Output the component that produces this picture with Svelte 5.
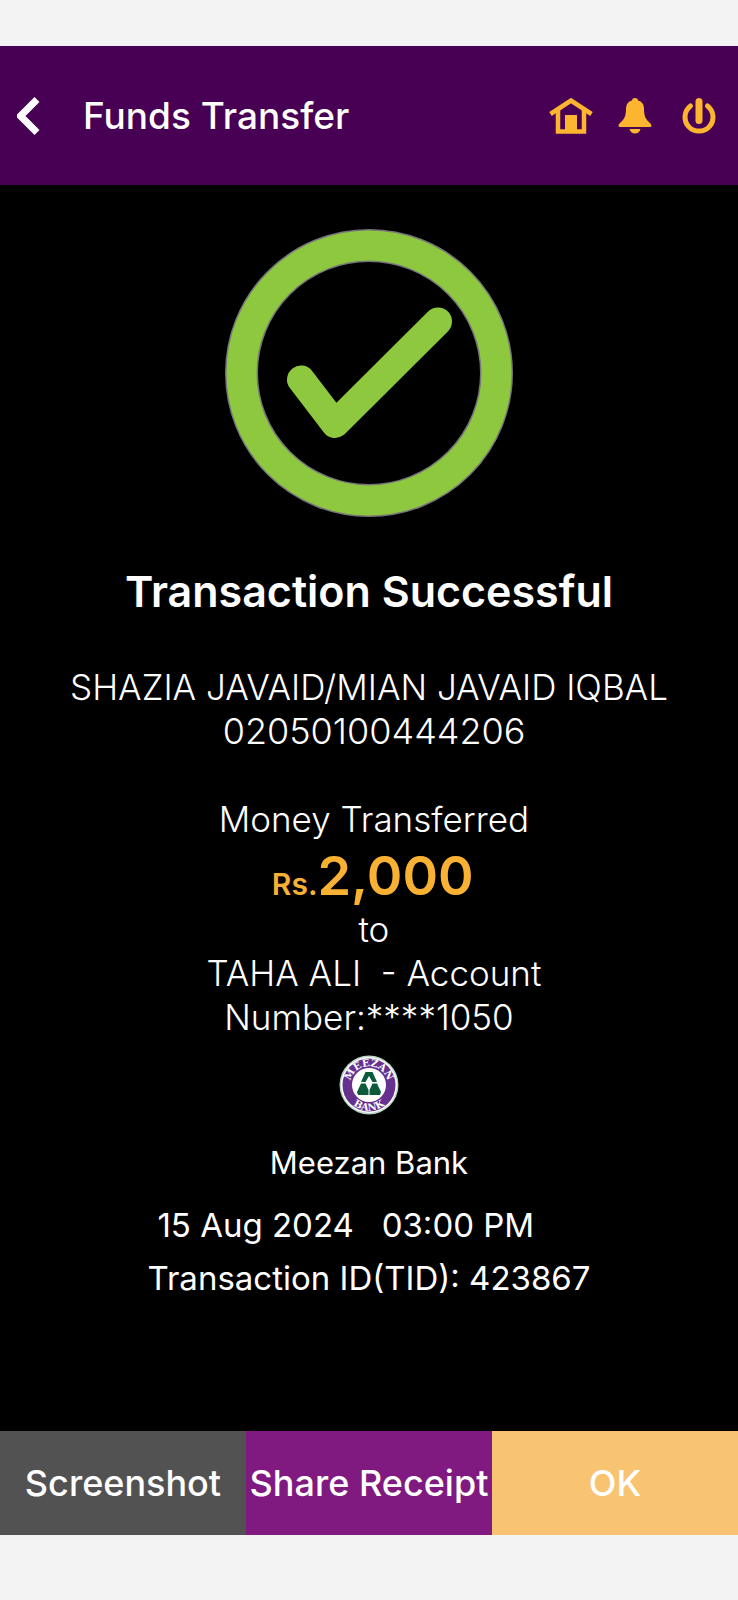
<script>
  const actions = [
    { label: 'Screenshot', kind: 'capture' },
    { label: 'Share Receipt', kind: 'share' },
    { label: 'OK', kind: 'ok' }
  ];
</script>

<div class="screen">
  <header>
    <button class="icon back" aria-label="Back">
      <svg width="24" height="38" viewBox="0 0 24 38"><path d="M20 2.500 L3.500 19 L20 35.500" fill="none" stroke="#fff" stroke-width="7" /></svg>
    </button>
    <h1>Funds Transfer</h1>
    <nav>
      <button class="icon" aria-label="Home">
        <svg width="44" height="36" viewBox="0 0 44 36">
          <path d="M1.500 16 L22 2.500 L42.500 16" fill="none" stroke="#fdb52f" stroke-width="4.500" />
          <path d="M9 12 V33.500 H35 V12" fill="none" stroke="#fdb52f" stroke-width="4.500" />
          <path d="M16 17 H28 V34 H16 Z" fill="#fdb52f" />
        </svg>
      </button>
      <button class="icon" aria-label="Notifications">
        <svg width="44" height="36" viewBox="0 0 44 36" fill="#fdb52f">
          <path d="M22 0 C24 0 25 1.200 25 2.500 C29 3.500 31 6.500 31 11 C31 19 33.500 22 37 25 C39.500 27.500 38.500 29 36.500 29 H7.500 C5.500 29 4.500 27.500 7 25 C10.500 22 13 19 13 11 C13 6.500 15 3.500 19 2.500 C19 1.200 20 0 22 0 Z" />
          <path d="M16.500 31 H27.500 C26 37 18 37 16.500 31 Z" />
        </svg>
      </button>
      <button class="icon" aria-label="Log out">
        <svg width="44" height="36" viewBox="0 0 44 36" fill="none" stroke="#fdb52f" stroke-linecap="round">
          <path d="M13.500 8 A14 14 0 1 0 30.500 8" stroke-width="5" />
          <path d="M22 3.500 V22.500" stroke-width="7" />
        </svg>
      </button>
    </nav>
  </header>

  <main>
    <svg class="check" width="288" height="288" viewBox="0 0 288 288" aria-hidden="true">
      <circle cx="144" cy="144" r="127.500" fill="none" stroke="#77777b" stroke-width="33" />
      <circle cx="144" cy="144" r="127.500" fill="none" stroke="#8dc83e" stroke-width="30" />
      <path d="M76 150.500 L110 195 L213 92.500" fill="none" stroke="#8dc83e" stroke-width="28" stroke-linecap="round" stroke-linejoin="round" />
    </svg>

    <h2>Transaction Successful</h2>

    <section class="parties">
      <p>SHAZIA JAVAID/MIAN JAVAID IQBAL</p>
      <p class="account">&nbsp;02050100444206</p>
      <p class="moved">&nbsp;Money Transferred</p>
      <p class="amount"><small>&nbsp;Rs.</small>2,000</p>
      <p>&nbsp;to</p>
      <p>&nbsp;TAHA ALI&nbsp; - Account</p>
      <p>Number:****1050</p>
    </section>

    <svg class="logo" width="60" height="60" viewBox="0 0 60 60" role="img" aria-label="Meezan Bank logo">
      <defs>
        <path id="arc-top" d="M11.500 34 A18.900 18.900 0 1 1 48.500 34" />
        <path id="arc-bottom" d="M4.500 30 A25.500 25.500 0 0 0 55.500 30" />
      </defs>
      <circle cx="30" cy="30" r="29.500" fill="#b9d3c4" />
      <circle cx="30" cy="30" r="28" fill="#fff" />
      <circle cx="30" cy="30" r="26.500" fill="#66308f" />
      <circle cx="30" cy="30" r="17" fill="#fff" />
      <g fill="#fff" font-family="DejaVu Serif, serif" font-weight="700" font-size="10" text-anchor="middle">
        <text><textPath href="#arc-top" startOffset="50%">MEEZAN</textPath></text>
        <text><textPath href="#arc-bottom" startOffset="50%">BANK</textPath></text>
      </g>
      <g fill="#0b5a3c">
        <path d="M26.500 17 H33.500 L38 27 H33.500 L30 21 L26.500 27 H22 Z" />
        <path d="M22 28.500 H26.500 L29.500 35 V40 H19 L18 37 Z" />
        <path d="M38 28.500 H33.500 L30.500 35 V40 H41 L42 37 Z" />
      </g>
    </svg>

    <section class="details">
      <p class="bank">Meezan Bank</p>
      <p>15 Aug 2024&nbsp;&nbsp; 03:00 PM&nbsp;&nbsp;&nbsp;&nbsp;&nbsp;</p>
      <p>Transaction ID(TID): 423867</p>
    </section>
  </main>

  <footer>
    {#each actions as action}
      <button class={action.kind}>{action.label}</button>
    {/each}
  </footer>
</div>

<style>
  :global(body) {
    margin: 0;
    background: #f3f3f3;
  }
  .screen {
    box-sizing: border-box;
    min-height: 100vh;
    padding: 46px 0 65px;
    display: flex;
    flex-direction: column;
    font-family: Inter, "Liberation Sans", sans-serif;
    color: #fff;
    background: #f3f3f3;
  }
  h1, h2, p {
    margin: 0;
  }
  button {
    border: 0;
    padding: 0;
    font: inherit;
    color: inherit;
    cursor: pointer;
  }
  svg {
    display: block;
  }
  header {
    height: 139px;
    padding: 0 17px;
    display: flex;
    align-items: center;
    background: #470053;
  }
  .icon {
    background: none;
  }
  h1 {
    margin-left: 42px;
    flex: 1;
    font-size: 37px;
    line-height: 48px;
    font-weight: 500;
  }
  nav {
    display: flex;
    gap: 20px;
  }
  main {
    flex: 1;
    padding-top: 44px;
    display: flex;
    flex-direction: column;
    align-items: center;
    text-align: center;
    background: #000;
  }
  h2 {
    margin-top: 46px;
    font-size: 43px;
    line-height: 56px;
    font-weight: 600;
  }
  .parties {
    margin-top: 46px;
    font-size: 35px;
    line-height: 44px;
    font-weight: 300;
  }
  .account {
    font-size: 36px;
  }
  .moved {
    margin-top: 44px;
  }
  .amount {
    margin-top: 4px;
    font-size: 54px;
    line-height: 62px;
    font-weight: 600;
    color: #f8b133;
  }
  .amount small {
    font-size: 30px;
    line-height: 1;
  }
  .logo {
    margin-top: 16px;
  }
  .details {
    margin-top: 28px;
    font-size: 33px;
    line-height: 53px;
  }
  .bank {
    margin-bottom: 16px;
    font-size: 31px;
    line-height: 40px;
  }
  footer {
    display: grid;
    grid-template-columns: repeat(3, 1fr);
  }
  footer button {
    height: 104px;
    font-size: 36px;
    font-weight: 500;
    white-space: nowrap;
  }
  .capture {
    background: #525252;
  }
  .share {
    background: #801a80;
  }
  .ok {
    background: #f8c471;
  }
</style>
